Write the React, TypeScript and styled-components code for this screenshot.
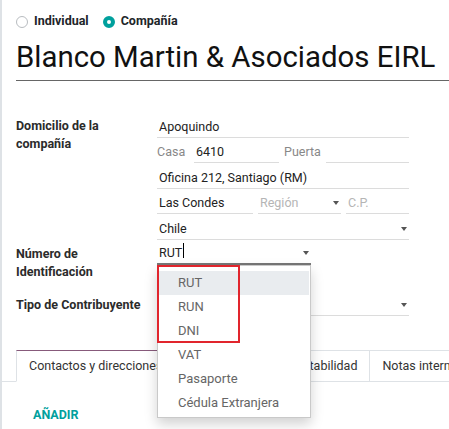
import React from 'react';
import styled, { createGlobalStyle } from 'styled-components';

const Global = createGlobalStyle`
  html, body { margin: 0; padding: 0; background: #fff; }
  body {
    font-family: Roboto, "Noto Sans", Arial, sans-serif;
    font-size: 12.5px;
    color: #4c4c4c;
    overflow: hidden;
  }
  * { box-sizing: border-box; }
`;

const Page = styled.div`
  position: relative;
  width: 449px;
  height: 429px;
  border-left: 2px solid #dee2e6;
  padding-left: 14px;
  overflow: hidden;
`;

const RadioRow = styled.div`
  display: flex;
  align-items: center;
  padding-top: 12px;
  height: 30px;
`;

const RadioOption = styled.label`
  display: flex;
  align-items: center;
  margin-right: 14px;
  font-weight: 700;
  color: #212529;
  line-height: 18px;
`;

const RadioDot = styled.span<{ $checked?: boolean }>`
  width: 12px;
  height: 12px;
  margin: 2px 6px 0 0;
  border-radius: 50%;
  background: #fff;
  border: ${(p) => (p.$checked ? '4px solid #00a09d' : '1px solid #b8bcc0')};
`;

const Title = styled.h1`
  margin: 8px 0 0;
  padding-bottom: 4px;
  font-size: 29.4px;
  font-weight: 400;
  line-height: 38px;
  color: #111;
  white-space: nowrap;
  border-bottom: 1px solid #666;
`;

const FormGrid = styled.div`
  display: grid;
  grid-template-columns: 141px 252px;
  margin-top: 31px;
`;

const Label = styled.div`
  padding: 5px 0 10px;
  font-weight: 700;
  line-height: 18px;
  color: #2b2b2b;
`;

const FieldCol = styled.div`
  display: flex;
  flex-direction: column;
`;

const Row = styled.div<{ $w?: number }>`
  position: relative;
  display: flex;
  gap: 5px;
  height: 25.5px;
  width: ${(p) => (p.$w ? `${p.$w}px` : 'auto')};
`;

const Input = styled.div<{ $w?: number; $focus?: boolean; $muted?: boolean }>`
  position: relative;
  flex: ${(p) => (p.$w ? `0 0 ${p.$w}px` : '1 1 0')};
  display: flex;
  align-items: flex-end;
  padding: 0 0 1px 2px;
  line-height: 18px;
  color: ${(p) => (p.$muted ? '#b5b5b5' : '#222')};
  border-bottom: ${(p) => (p.$focus ? '2px solid #777' : '1px solid #dcdcdc')};
  white-space: nowrap;
`;

const InlineLabel = styled.div<{ $w: number }>`
  flex: 0 0 ${(p) => p.$w}px;
  display: flex;
  align-items: flex-end;
  padding: 0 0 2px 0;
  line-height: 18px;
  color: #888;
`;

const Caret = styled.span`
  position: absolute;
  right: 2px;
  bottom: 8px;
  width: 0;
  height: 0;
  border-left: 3.5px solid transparent;
  border-right: 3.5px solid transparent;
  border-top: 4px solid #555;
`;

const Cursor = styled.span`
  display: inline-block;
  width: 1px;
  height: 15px;
  margin: 0 0 1px 1px;
  align-self: center;
  background: #000;
`;

const Menu = styled.ul`
  position: absolute;
  left: 0;
  top: 100%;
  width: 154px;
  margin: 0;
  padding: 5px 0 2px;
  list-style: none;
  background: #fff;
  border: 1px solid #c9c9c9;
  box-shadow: 0 6px 12px rgba(0, 0, 0, 0.18);
  z-index: 10;
`;

const MenuItem = styled.li<{ $active?: boolean }>`
  height: 24px;
  line-height: 24px;
  padding-left: 19px;
  font-size: 13px;
  color: #666;
  background: ${(p) => (p.$active ? '#e9ecef' : 'transparent')};
  margin: 0 1px;
`;

const Highlight = styled.div`
  position: absolute;
  left: 0;
  top: 100%;
  width: 83px;
  height: 78px;
  border: 2px solid #e1252d;
  z-index: 11;
  pointer-events: none;
`;

const Tabs = styled.div`
  display: flex;
  margin: 26px 0 0 -14px;
  padding-left: 14px;
  border-bottom: 1px solid #dee2e6;
`;

const Tab = styled.div<{ $active?: boolean; $w?: number }>`
  height: 32px;
  padding: 0 12px;
  line-height: 30px;
  white-space: nowrap;
  overflow: hidden;
  color: #333;
  border-top: 1px solid ${(p) => (p.$active ? '#875a7b' : '#dee2e6')};
  border-right: 1px solid #dee2e6;
  border-left: ${(p) => (p.$active ? '1px solid #dee2e6' : 'none')};
  border-bottom: 1px solid ${(p) => (p.$active ? '#fff' : 'transparent')};
  margin-bottom: -1px;
  ${(p) => (p.$w ? `flex: 0 0 ${p.$w}px;` : 'flex: 0 0 auto;')}
`;

const TabBody = styled.div`
  padding: 24px 0 0 17px;
`;

const AddLink = styled.span`
  font-weight: 700;
  line-height: 18px;
  color: #00a09d;
  text-transform: uppercase;
`;

export default function App() {
  return (
    <>
      <Global />
      <Page>
        <RadioRow>
          <RadioOption>
            <RadioDot />
            Individual
          </RadioOption>
          <RadioOption>
            <RadioDot $checked />
            Compañía
          </RadioOption>
        </RadioRow>
        <Title>Blanco Martin &amp; Asociados EIRL</Title>
        <FormGrid>
          <Label>
            Domicilio de la
            <br />
            compañía
          </Label>
          <FieldCol>
            <Row>
              <Input>Apoquindo</Input>
            </Row>
            <Row>
              <InlineLabel $w={32}>Casa</InlineLabel>
              <Input $w={85}>6410</Input>
              <InlineLabel $w={35}>Puerta</InlineLabel>
              <Input />
            </Row>
            <Row>
              <Input>Oficina 212, Santiago (RM)</Input>
            </Row>
            <Row>
              <Input $w={96}>Las Condes</Input>
              <Input $w={83} $muted>
                Región
                <Caret />
              </Input>
              <Input $muted>C.P.</Input>
            </Row>
            <Row>
              <Input>
                Chile
                <Caret />
              </Input>
            </Row>
          </FieldCol>
          <Label>
            Número de
            <br />
            Identificación
          </Label>
          <FieldCol>
            <Row $w={154}>
              <Input $focus>
                RUT
                <Cursor />
                <Caret />
              </Input>
              <Menu>
                <MenuItem $active>RUT</MenuItem>
                <MenuItem>RUN</MenuItem>
                <MenuItem>DNI</MenuItem>
                <MenuItem>VAT</MenuItem>
                <MenuItem>Pasaporte</MenuItem>
                <MenuItem>Cédula Extranjera</MenuItem>
              </Menu>
              <Highlight />
            </Row>
          </FieldCol>
          <Label>Tipo de Contribuyente</Label>
          <FieldCol>
            <Row>
              <Input>
                <Caret />
              </Input>
            </Row>
          </FieldCol>
        </FormGrid>
        <Tabs>
          <Tab $active>Contactos y direcciones</Tab>
          <Tab $w={100}>Ventas y compras</Tab>
          <Tab>Contabilidad</Tab>
          <Tab>Notas internas</Tab>
        </Tabs>
        <TabBody>
          <AddLink>Añadir</AddLink>
        </TabBody>
      </Page>
    </>
  );
}
